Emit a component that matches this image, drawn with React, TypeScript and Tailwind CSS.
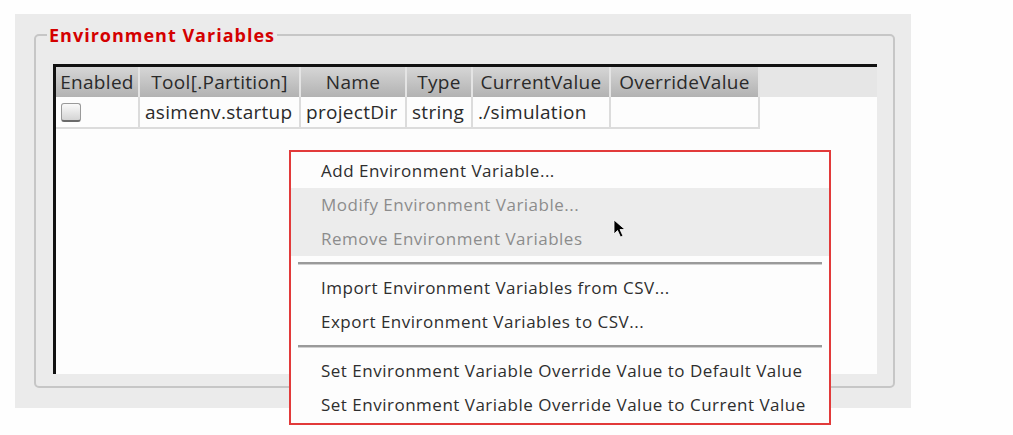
const font = { fontFamily: '"Open Sans", "DejaVu Sans", sans-serif' };

const columns = [
  { label: 'Enabled', w: 'w-[84px]' },
  { label: 'Tool[.Partition]', w: 'w-[161px]' },
  { label: 'Name', w: 'w-[106px]' },
  { label: 'Type', w: 'w-[66px]' },
  { label: 'CurrentValue', w: 'w-[138px]' },
  { label: 'OverrideValue', w: 'w-[149px]' },
];

const row = ['', 'asimenv.startup', 'projectDir', 'string', './simulation', ''];

function MenuItem({ label, disabled }: { label: string; disabled?: boolean }) {
  return (
    <div
      className={`h-[34px] flex items-center pl-[30px] text-[17px] tracking-[0.5px] ${
        disabled ? 'text-[#8c8c8c]' : 'text-[#2e2e2e]'
      }`}
    >
      {label}
    </div>
  );
}

function Separator() {
  return <div className="mx-[7px] my-[6px] h-[3px] bg-[#9a9a9a] border-b border-[#d0d0d0]" />;
}

export default function App() {
  return (
    <div className="relative w-[1013px] h-[435px] bg-[#fefefe] pt-[14px] pl-[15px]" style={font}>
      {/* dialog panel */}
      <div className="w-[896px] h-[394px] bg-[#ebebeb] pt-[10px] pl-[19px]">
        <fieldset className="w-[861px] h-[364px] border-2 border-[#c6c6c6] rounded-[5px] pl-[17px] pt-[18px]">
          <legend className="-ml-[6px] px-[2px] text-[18px] font-bold tracking-[1px] text-[#d40000] leading-[22px]">
            Environment Variables
          </legend>

          {/* table viewport */}
          <div className="w-[824px] h-[310px] bg-[#fdfdfd] border-l-[3px] border-t-[3px] border-[#111]">
            <div className="flex h-[30px] bg-[#e6e6e6]">
              {columns.map((c) => (
                <div
                  key={c.label}
                  className={`${c.w} h-full flex items-center justify-center text-[19px] tracking-[0.3px] text-[#2a2a2a] bg-gradient-to-b from-[#d6d6d6] to-[#b2b2b2] border-r-2 border-[#e4e4e4]`}
                >
                  {c.label}
                </div>
              ))}
            </div>
            <div className="flex h-[32px]">
              {row.map((v, i) => (
                <div
                  key={i}
                  className={`${columns[i].w} h-full flex items-center px-[5px] text-[19px] tracking-[0.3px] text-[#2a2a2a] border-r-2 border-b-2 border-[#dcdcdc]`}
                >
                  {i === 0 ? (
                    <div className="w-[20px] h-[19px] rounded-[3px] border border-[#9a9a9a] bg-gradient-to-b from-[#fafafa] to-[#d4d4d4] border-b-2 border-b-[#6a6a6a]" />
                  ) : (
                    v
                  )}
                </div>
              ))}
            </div>
          </div>
        </fieldset>
      </div>

      {/* context menu */}
      <div className="absolute left-[289px] top-[150px] w-[542px] h-[275px] bg-[#fdfdfd] border-2 border-[#e23a3a] pt-[2px]">
        <MenuItem label="Add Environment Variable..." />
        <div className="bg-[#ececec]">
          <MenuItem label="Modify Environment Variable..." disabled />
          <MenuItem label="Remove Environment Variables" disabled />
        </div>
        <Separator />
        <MenuItem label="Import Environment Variables from CSV..." />
        <MenuItem label="Export Environment Variables to CSV..." />
        <Separator />
        <MenuItem label="Set Environment Variable Override Value to Default Value" />
        <MenuItem label="Set Environment Variable Override Value to Current Value" />
      </div>

      {/* mouse pointer */}
      <svg className="absolute left-[613px] top-[219px]" width="16" height="20" viewBox="0 0 16 20">
        <path d="M1 1 L1 15 L4.5 11.5 L7.5 18 L10 17 L7 10.5 L12 10.5 Z" fill="#000" stroke="#fff" strokeWidth="0.8" />
      </svg>
    </div>
  );
}
